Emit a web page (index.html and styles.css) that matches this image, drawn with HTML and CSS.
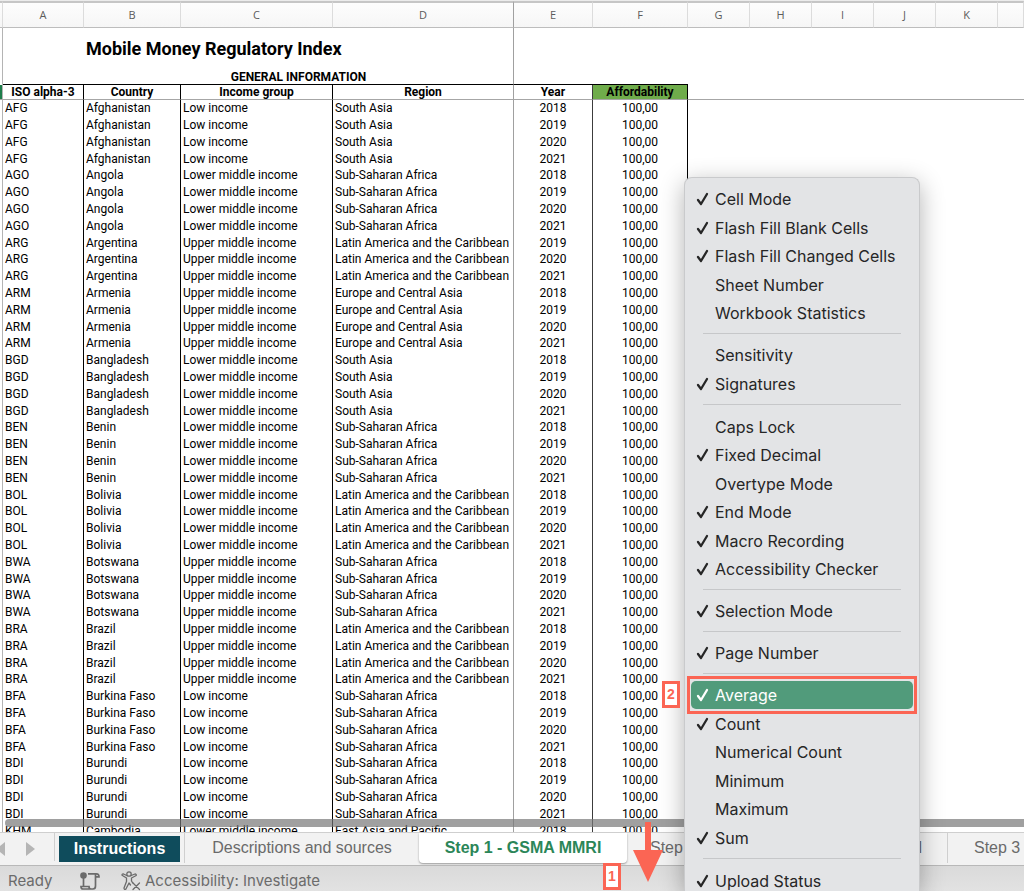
FILE: index.html
```html
<!DOCTYPE html>
<html lang="en">
<head>
    <meta charset="UTF-8">
    <meta name="viewport" content="width=device-width, initial-scale=1.0">
    <title>Mobile Money Regulatory Index</title>
    <link rel="stylesheet" href="styles.css">
</head>
<body>
    <main class="sheet">
        <table class="grid">
            <colgroup>
                <col class="col-rowhead">
                <col class="col-a">
                <col class="col-b">
                <col class="col-c">
                <col class="col-d">
                <col class="col-e">
                <col class="col-f">
                <col class="col-blank">
                <col class="col-blank">
                <col class="col-blank">
                <col class="col-blank">
                <col class="col-blank">
                <col>
            </colgroup>
            <thead>
                <tr class="letters">
                    <th></th><th>A</th><th>B</th><th>C</th><th class="freeze">D</th><th>E</th><th>F</th>
                    <th>G</th><th>H</th><th>I</th><th>J</th><th>K</th><th></th>
                </tr>
                <tr class="title">
                    <td class="rowhead"></td><td></td><td class="freeze" colspan="3"><h1>Mobile Money Regulatory Index</h1></td><td colspan="8"></td>
                </tr>
                <tr class="section">
                    <td class="rowhead"></td><td class="lined"></td><th class="freeze lined" colspan="3">GENERAL INFORMATION</th><td class="lined" colspan="2"></td><td colspan="6"></td>
                </tr>
                <tr class="names">
                    <td class="rowhead selected"></td><th>ISO alpha-3</th><th>Country</th><th>Income group</th><th class="freeze">Region</th><th>Year</th><th class="green">Affordability</th><td colspan="6"></td>
                </tr>
            </thead>
            <tbody id="rows"></tbody>
        </table>
        <div class="scrollbar"></div>
    </main>

    <nav class="tabs">
        <button class="step" type="button" aria-label="Previous sheet"><svg width="9" height="14" viewBox="0 0 9 14"><path d="M9 0v14L0 7z"/></svg></button>
        <button class="step next" type="button" aria-label="Next sheet"><svg width="9" height="14" viewBox="0 0 9 14"><path d="M0 0v14l9-7z"/></svg></button>
        <button class="tab instructions" type="button">Instructions</button>
        <button class="tab descriptions" type="button">Descriptions and sources</button>
        <button class="tab active" type="button">Step 1 - GSMA MMRI</button>
        <button class="tab covered" type="button"><span>Step</span><span>l</span></button>
        <button class="tab last" type="button">Step 3</button>
    </nav>

    <footer class="status">
        <span class="ready">Ready</span>
        <svg class="macro" width="20" height="18" viewBox="0 0 20 18">
            <circle cx="3.500" cy="3.500" r="3.300" fill="#6b6b6b"/>
            <path d="M8 1.800h8.500q2.500 0 2.500 3h-3.500M15.500 2v12q0 3-2.500 3H3q-2 0-2-2.500h8q0 2.500 2 2.500M3.500 6v8" fill="none" stroke="#6b6b6b" stroke-width="1.700"/>
        </svg>
        <button class="access" type="button">
            <svg width="20" height="20" viewBox="0 0 20 20" fill="none" stroke="#6b6b6b" stroke-width="1.300" stroke-linecap="round" stroke-linejoin="round">
                <circle cx="8" cy="3" r="2.200"/>
                <path d="M5.800 4.500L2.500 3Q.8 2.700 1 4.200L5.500 7v3.500L3 17q0 1.800 1.800 1.200L8 12l1.500 2M10.200 4.500L14 3q1.600 0 1.200 1.500L10.500 7v3l1.200 1.800"/>
                <path d="M12 12l6.500 6.500M18.500 12L12 18.500"/>
            </svg>
            Accessibility: Investigate
        </button>
    </footer>

    <ul class="menu" id="menu" role="menu"></ul>

    <span class="badge badge-one">1</span>
    <span class="badge badge-two">2</span>
    <svg class="arrow" width="32" height="60" viewBox="0 0 32 60"><path d="M13 0h6v28h12L16 60 1 28h12z" fill="#fb6554"/></svg>

    <script src="script.js"></script>
</body>
</html>
```
FILE: styles.css
```css
* {
    box-sizing: border-box;
}
body {
    margin: 0;
    height: 100vh;
    display: flex;
    flex-direction: column;
    overflow: hidden;
    position: relative;
    background-color: #ffffff;
    font-family: Inter, "Liberation Sans", sans-serif;
}
button {
    border: none;
    background: none;
    padding: 0;
    margin: 0;
    font: inherit;
    color: inherit;
}

/* spreadsheet */
.sheet {
    flex: 1;
    min-height: 0;
    overflow: hidden;
    position: relative;
    border-top: 1px solid #ececec;
}
.grid {
    width: 100%;
    table-layout: fixed;
    border-collapse: separate;
    border-spacing: 0;
    font-family: Roboto, sans-serif;
    font-size: 12px;
    line-height: 14px;
    color: #000000;
}
.col-rowhead {
    width: 3px;
}
.col-a {
    width: 81px;
}
.col-b {
    width: 97px;
}
.col-c {
    width: 152px;
}
.col-d {
    width: 181px;
}
.col-e {
    width: 79px;
}
.col-f {
    width: 95px;
}
.col-blank {
    width: 62px;
}
.grid th, .grid td {
    padding: 0 2px;
    overflow: hidden;
    white-space: nowrap;
}
.grid .rowhead {
    padding: 0;
    border-right: 1px solid #b4b4b4;
}
.grid .selected {
    background-color: #1e7d4b;
}
.letters th {
    height: 27px;
    border-top: 2px solid #c6c6c6;
    border-bottom: 1px solid #bdbdbd;
    border-right: 1px solid #dcdcdc;
    background: linear-gradient(#fdfdfd, #f6f6f6);
    font-family: "Open Sans", sans-serif;
    font-size: 11px;
    font-weight: normal;
    color: #5c5c5c;
}
.title td {
    height: 42px;
}
.title h1 {
    margin: 0;
    font-size: 18px;
    line-height: 22px;
    font-weight: bold;
}
.section th, .section td {
    height: 14px;
}
.section .lined {
    border-bottom: 1px solid #000000;
}
.names th, .names td {
    height: 15px;
    border-bottom: 1px solid #a6a6a6;
}
.names th {
    border-right: 1px solid #000000;
}
.names .green {
    background-color: #6fac4b;
}
#rows td {
    height: 17px;
    padding-bottom: 2px;
    border-right: 1px solid #000000;
}
#rows tr:nth-child(5n) td {
    height: 16px;
}
#rows td:last-child {
    border-right: none;
}
#rows .rowhead {
    border-right: 1px solid #b4b4b4;
}
#rows .number {
    text-align: center;
}
.grid .freeze, #rows .freeze {
    border-right: 1px solid #a0a0a0;
}
.grid th:nth-child(6), #rows td:nth-child(6) {
    border-right-color: #3c3c3c;
}
.letters th:nth-child(6) {
    border-right-color: #dcdcdc;
}
.scrollbar {
    position: absolute;
    left: 5px;
    right: 0;
    bottom: 5px;
    height: 8px;
    border-radius: 4px 0 0 4px;
    background-color: rgba(120, 120, 120, 0.7);
}

/* sheet tabs */
.tabs {
    flex: none;
    height: 34px;
    display: flex;
    align-items: flex-start;
    overflow: hidden;
    background-color: #f2f2f2;
    border-top: 1px solid #cfcfcf;
    border-bottom: 1px solid #b8b8b8;
    font-family: "Liberation Sans", sans-serif;
    font-size: 16px;
    color: #6a6a6a;
}
.step {
    width: 5px;
    height: 32px;
    display: flex;
    align-items: center;
    justify-content: flex-end;
    fill: #b5b5b5;
}
.step svg {
    flex: none;
}
.next {
    width: 50px;
    height: 28px;
    padding-left: 21px;
    padding-top: 4px;
    justify-content: flex-start;
    border-right: 1px solid #cfcfcf;
}
.tab {
    flex: none;
    height: 30px;
    white-space: nowrap;
}
.instructions {
    width: 121px;
    height: 26px;
    margin: 3px 4px 0;
    background-color: #0f4c5c;
    color: #ffffff;
    font-weight: bold;
}
.descriptions {
    width: 235px;
    border-left: 1px solid #cfcfcf;
}
.active {
    width: 208px;
    background-color: #ffffff;
    border-radius: 0 0 4px 4px;
    box-shadow: 0 1px 2px #999999;
    color: #2b8658;
    font-weight: bold;
}
.covered {
    width: 321px;
    padding: 0 25px 0 23px;
    display: flex;
    align-items: center;
    justify-content: space-between;
    border-right: 1px solid #cfcfcf;
}
.last {
    padding-left: 26px;
}

/* status bar */
.status {
    flex: none;
    height: 25px;
    padding: 4px 8px 0;
    display: flex;
    align-items: center;
    background: linear-gradient(#dadada, #e2e2e2);
    font-size: 15px;
    line-height: 20px;
    color: #6b6b6b;
}
.ready {
    width: 72px;
}
.access {
    margin-left: 21px;
    display: flex;
    align-items: center;
    gap: 4px;
}

/* status bar context menu */
.menu {
    position: absolute;
    left: 684px;
    top: 177px;
    bottom: 0;
    width: 236px;
    margin: 0;
    padding: 7px 6px 0;
    overflow: hidden;
    list-style: none;
    background-color: #e3e4e6;
    border: 1px solid #c9cacc;
    border-bottom: none;
    border-radius: 8px 8px 0 0;
    box-shadow: 0 6px 24px rgba(0, 0, 0, 0.3);
    font-size: 16px;
    color: #262626;
}
.menu li {
    height: 28px;
    position: relative;
}
.menu li:nth-child(even) {
    height: 29px;
}
.menu li.separator {
    height: 14px;
    padding: 6px 12px;
}
.menu hr {
    margin: 0;
    border: none;
    border-top: 1px solid #c6c7c9;
}
.item {
    width: 100%;
    height: 100%;
    padding-left: 5px;
    display: flex;
    align-items: center;
    gap: 6px;
    border-radius: 5px;
    white-space: nowrap;
}
.tick {
    flex: none;
    width: 13px;
    height: 14px;
    fill: none;
    stroke: currentColor;
    stroke-width: 2.3;
    stroke-linecap: round;
    stroke-linejoin: round;
}
.highlight {
    background-color: #519b7b;
    color: #ffffff;
}
.frame {
    position: absolute;
    inset: -5px -4px;
    border: 3px solid #fb6554;
}

/* numbered steps */
.badge {
    position: absolute;
    width: 18px;
    height: 27px;
    border: 3px solid #fb6554;
    background-color: #ffffff;
    color: #fb6554;
    font-family: "Liberation Sans", sans-serif;
    font-size: 14px;
    font-weight: bold;
    line-height: 21px;
    text-align: center;
}
.badge-one {
    left: 603px;
    top: 863px;
}
.badge-two {
    left: 662px;
    top: 681px;
}
.arrow {
    position: absolute;
    left: 632px;
    top: 822px;
}
```
FILE: script.js
```js
const countries = [
    ['AFG', 'Afghanistan', 'Low income', 'South Asia', 2018],
    ['AGO', 'Angola', 'Lower middle income', 'Sub-Saharan Africa', 2018],
    ['ARG', 'Argentina', 'Upper middle income', 'Latin America and the Caribbean', 2019],
    ['ARM', 'Armenia', 'Upper middle income', 'Europe and Central Asia', 2018],
    ['BGD', 'Bangladesh', 'Lower middle income', 'South Asia', 2018],
    ['BEN', 'Benin', 'Lower middle income', 'Sub-Saharan Africa', 2018],
    ['BOL', 'Bolivia', 'Lower middle income', 'Latin America and the Caribbean', 2018],
    ['BWA', 'Botswana', 'Upper middle income', 'Sub-Saharan Africa', 2018],
    ['BRA', 'Brazil', 'Upper middle income', 'Latin America and the Caribbean', 2018],
    ['BFA', 'Burkina Faso', 'Low income', 'Sub-Saharan Africa', 2018],
    ['BDI', 'Burundi', 'Low income', 'Sub-Saharan Africa', 2018],
    ['KHM', 'Cambodia', 'Lower middle income', 'East Asia and Pacific', 2018, 2018]
];

let rows = '';
countries.forEach(([code, name, income, region, first, last = 2021]) => {
    for (let year = first; year <= last; year++) {
        rows += `<tr><td class="rowhead"></td><td>${code}</td><td>${name}</td><td>${income}</td>` +
            `<td class="freeze">${region}</td><td class="number">${year}</td>` +
            `<td class="number">100,00</td><td colspan="6"></td></tr>`;
    }
});
document.getElementById('rows').innerHTML = rows;

// a leading + marks a ticked entry
const groups = [
    ['+Cell Mode', '+Flash Fill Blank Cells', '+Flash Fill Changed Cells', 'Sheet Number', 'Workbook Statistics'],
    ['Sensitivity', '+Signatures'],
    ['Caps Lock', '+Fixed Decimal', 'Overtype Mode', '+End Mode', '+Macro Recording', '+Accessibility Checker'],
    ['+Selection Mode'],
    ['+Page Number'],
    ['+Average', '+Count', 'Numerical Count', 'Minimum', 'Maximum', '+Sum'],
    ['+Upload Status']
];

function menuItem(entry) {
    const checked = entry.startsWith('+');
    const label = entry.replace('+', '');
    const current = label === 'Average';
    return `<li role="none"><button type="button" role="menuitemcheckbox" aria-checked="${checked}" class="item${current ? ' highlight' : ''}">` +
        `<svg class="tick" viewBox="0 0 13 14">${checked ? '<path d="M2 8l3 4 6-10"/>' : ''}</svg>${label}</button>` +
        `${current ? '<span class="frame"></span>' : ''}</li>`;
}

document.getElementById('menu').innerHTML = groups
    .map(group => group.map(menuItem).join(''))
    .join('<li class="separator" role="separator"><hr></li>');
```
